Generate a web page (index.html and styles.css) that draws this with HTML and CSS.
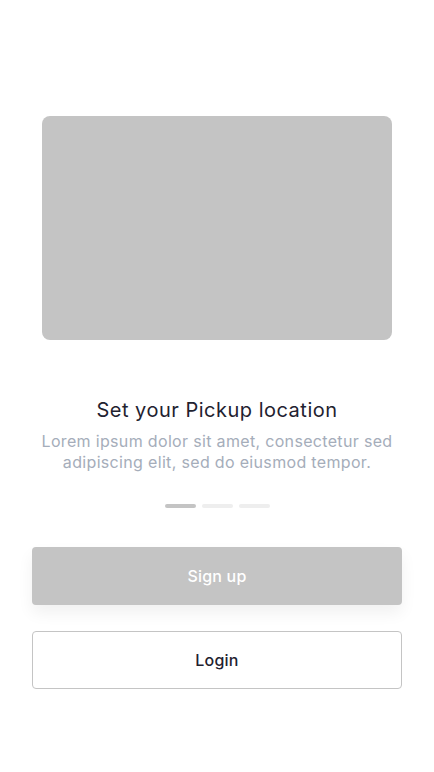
FILE: index.html
```html
<!DOCTYPE html>
<html>
<head>
<meta charset="utf-8">
<link rel="stylesheet" href="styles.css">
</head>
<body>
<main class="screen">
  <div class="hero"></div>
  <h1 class="title">Set your Pickup location</h1>
  <p class="desc">Lorem ipsum dolor sit amet, consectetur sed adipiscing elit, sed do eiusmod tempor.</p>
  <div class="dots">
    <span class="dot active"></span>
    <span class="dot"></span>
    <span class="dot"></span>
  </div>
  <div class="actions">
    <button class="btn primary">Sign up</button>
    <button class="btn outline">Login</button>
  </div>
</main>
</body>
</html>
```
FILE: styles.css
```css
html, body {
  margin: 0;
  padding: 0;
  background: #fff;
}
body {
  font-family: Inter, "Noto Sans", sans-serif;
}
.screen {
  width: 434px;
  height: 772px;
  display: flex;
  flex-direction: column;
  align-items: center;
  padding-top: 116px;
  box-sizing: border-box;
}
.hero {
  width: 350px;
  height: 224px;
  background: #c4c4c4;
  border-radius: 8px;
}
.title {
  margin: 57px 0 0;
  font-size: 20px;
  font-weight: 400;
  line-height: 26px;
  letter-spacing: 0.5px;
  color: #1f2230;
}
.desc {
  margin: 8px 0 0;
  width: 390px;
  text-align: center;
  font-size: 16px;
  line-height: 21px;
  letter-spacing: 0.33px;
  color: #a5adba;
}
.dots {
  display: flex;
  gap: 6px;
  margin-top: 31px;
}
.dot {
  width: 31px;
  height: 4px;
  border-radius: 2px;
  background: #eeeeee;
}
.dot.active {
  background: #c4c4c4;
}
.actions {
  margin-top: 39px;
  display: flex;
  flex-direction: column;
  gap: 26px;
}
.btn {
  width: 370px;
  height: 58px;
  border-radius: 4px;
  font-family: Inter, "Noto Sans", sans-serif;
  font-size: 16px;
  font-weight: 500;
  letter-spacing: 0.2px;
  box-sizing: border-box;
}
.primary {
  background: #c4c4c4;
  color: #fff;
  border: none;
  box-shadow: 0 8px 16px rgba(0, 0, 0, 0.06);
}
.outline {
  background: #fff;
  color: #1f2230;
  border: 1px solid #c4c4c4;
}
```
